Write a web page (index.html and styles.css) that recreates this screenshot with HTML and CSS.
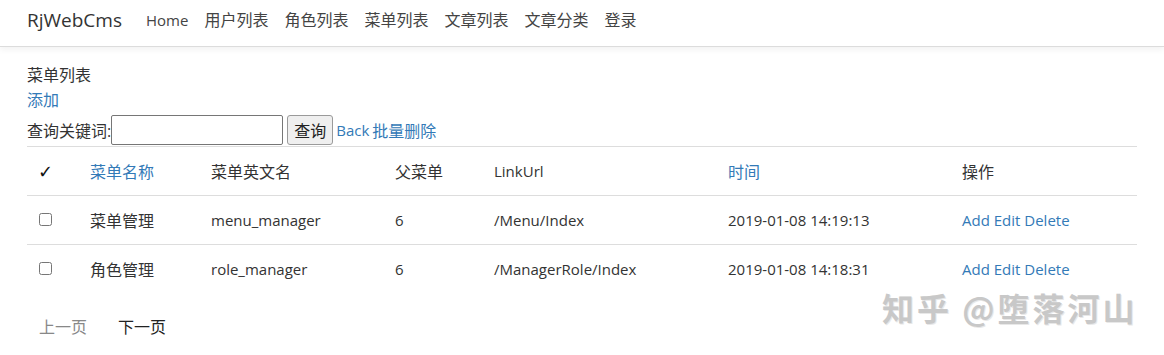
FILE: index.html
```html
<!DOCTYPE html>
<html lang="zh-CN">
<head>
    <meta charset="UTF-8">
    <meta name="viewport" content="width=device-width, initial-scale=1.0">
    <title>菜单列表 - RjWebCms</title>
    <link rel="stylesheet" href="styles.css">
</head>
<body>

    <div class="navbar">
        <a class="brand" href="#">RjWebCms</a>
        <ul class="nav">
            <li><a href="#" class="en">Home</a></li>
            <li><a href="#">用户列表</a></li>
            <li><a href="#">角色列表</a></li>
            <li><a href="#">菜单列表</a></li>
            <li><a href="#">文章列表</a></li>
            <li><a href="#">文章分类</a></li>
            <li><a href="#">登录</a></li>
        </ul>
    </div>

    <div class="content">
        <div class="line">菜单列表</div>
        <div class="line"><a href="#">添加</a></div>
        <form class="search">
            <label for="keyword">查询关键词:</label>
            <input type="text" id="keyword">
            <button type="submit" class="btn">查询</button>
            <a href="#" class="en">Back</a>
            <a href="#" class="batch">批量删除</a>
        </form>

        <table class="table">
            <colgroup>
                <col style="width: 55px">
                <col style="width: 121px">
                <col style="width: 184px">
                <col style="width: 99px">
                <col style="width: 234px">
                <col style="width: 234px">
                <col>
            </colgroup>
            <thead>
                <tr>
                    <th class="check-col">&#10003;</th>
                    <th><a href="#">菜单名称</a></th>
                    <th>菜单英文名</th>
                    <th>父菜单</th>
                    <th class="en">LinkUrl</th>
                    <th><a href="#">时间</a></th>
                    <th>操作</th>
                </tr>
            </thead>
            <tbody>
                <tr>
                    <td class="check-col"><input type="checkbox"></td>
                    <td>菜单管理</td>
                    <td class="en">menu_manager</td>
                    <td class="en">6</td>
                    <td class="en">/Menu/Index</td>
                    <td class="en">2019-01-08 14:19:13</td>
                    <td class="en"><a href="#">Add</a> <a href="#">Edit</a> <a href="#">Delete</a></td>
                </tr>
                <tr>
                    <td class="check-col"><input type="checkbox"></td>
                    <td>角色管理</td>
                    <td class="en">role_manager</td>
                    <td class="en">6</td>
                    <td class="en">/ManagerRole/Index</td>
                    <td class="en">2019-01-08 14:18:31</td>
                    <td class="en"><a href="#">Add</a> <a href="#">Edit</a> <a href="#">Delete</a></td>
                </tr>
            </tbody>
        </table>

        <ul class="pager">
            <li class="disabled"><span>上一页</span></li>
            <li><a href="#">下一页</a></li>
        </ul>
    </div>

    <div class="watermark">知乎 @堕落河山</div>

</body>
</html>
```

FILE: styles.css
```css
body {
    margin: 0;
    font-family: "Open Sans", "Noto Sans CJK SC", sans-serif;
    font-size: 16px;
    color: #333;
    background: #fff;
    position: relative;
    min-height: 355px;
}

a {
    color: #337ab7;
    text-decoration: none;
}

/* latin text runs a little smaller than the chinese */
.en {
    font-size: 15px;
}

.navbar {
    display: flex;
    align-items: center;
    height: 46px;
    padding: 0 27px;
    background: #fff;
    border-bottom: 1px solid #dcdcdc;
    box-shadow: 0 3px 6px rgba(0, 0, 0, 0.05);
}

.brand {
    font-size: 19px;
    color: #333;
    margin-right: 16px;
    margin-top: -6px;
}

.nav {
    display: flex;
    align-items: baseline;
    list-style: none;
    margin: -8px 0 0;
    padding: 0;
}

.nav a {
    display: block;
    padding: 0 8px;
    color: #444;
}

.content {
    padding: 16px 27px 0;
}

.line {
    line-height: 25px;
}

.search {
    display: flex;
    align-items: center;
    height: 33px;
    margin: 0;
}

.search input {
    width: 168px;
    height: 26px;
    margin: 0;
    padding: 1px;
    border: 1px solid #767676;
    border-radius: 2px;
}

.btn {
    height: 30px;
    margin: 0 3px 0 4px;
    padding: 0 6px;
    font-family: inherit;
    font-size: 16px;
    color: #222;
    background: #efefef;
    border: 1px solid #9a9a9a;
    border-radius: 3px;
}

.batch {
    margin-left: 3px;
}

.table {
    width: 100%;
    table-layout: fixed;
    border-collapse: collapse;
}

.table th,
.table td {
    height: 48px;
    padding: 0 8px;
    border-top: 1px solid #ddd;
    text-align: left;
    font-weight: normal;
    vertical-align: middle;
    white-space: nowrap;
}

.table th.check-col {
    padding-left: 11px;
    font-family: "DejaVu Sans", sans-serif;
    font-size: 18px;
    font-weight: bold;
    color: #111;
}

.check-col input {
    width: 13px;
    height: 13px;
    margin: 0 0 0 4px;
}

.pager {
    display: flex;
    list-style: none;
    margin: 18px 0 0;
    padding: 0;
}

.pager li span,
.pager li a {
    display: block;
    padding: 6px 12px;
    line-height: 21px;
    margin-right: 7px;
}

.pager li a {
    color: #222;
}

.pager .disabled span {
    color: #888;
}

.watermark {
    position: absolute;
    left: 882px;
    top: 284px;
    font-family: "Noto Sans CJK SC", sans-serif;
    font-size: 32px;
    font-weight: bold;
    color: #c8c8c8;
    letter-spacing: 3px;
    text-shadow: 1px 1px 0 #e8e8e8;
}
```
